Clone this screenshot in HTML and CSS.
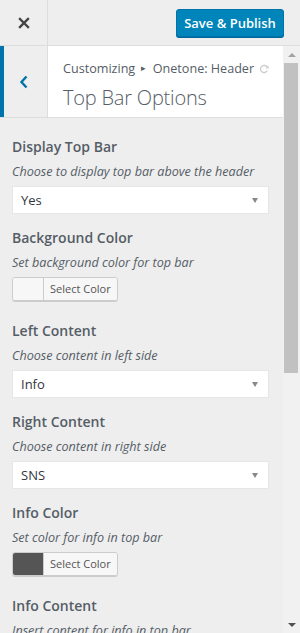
FILE: index.html
```html
<!DOCTYPE html>
<html lang="en">
<head>
 <meta charset="UTF-8">
 <meta name="viewport" content="width=device-width,initial-scale=1.0">
 <title>Customize: Top Bar Options</title>
 <link rel="stylesheet" href="styles.css">
</head>
<body>
<div class="header">
  <div class="close">
    <svg width="12" height="12" viewBox="0 0 12 12"><path d="M2 2 L10 10 M10 2 L2 10" stroke="#444" stroke-width="2.4" stroke-linecap="square"/></svg>
  </div>
  <div class="actions"><button type="button" class="publish">Save &amp; Publish</button></div>
</div>
<div class="frame">
  <div class="main">
    <div class="meta">
      <div class="back">
        <svg width="10" height="14" viewBox="0 0 10 14"><path d="M7.5 1.5 L2.5 7 L7.5 12.5" fill="none" stroke="#0073aa" stroke-width="2.4"/></svg>
      </div>
      <div class="meta_info">
        <div class="crumb">Customizing <span class="sep">&#9656;</span> Onetone: Header
          <svg class="refresh" width="10" height="10" viewBox="0 0 10 10"><path d="M8.3 3.5 A3.6 3.6 0 1 0 8.3 6.5" fill="none" stroke="#ccc" stroke-width="1.3"/><path d="M9.6 1.6 L9.6 4.6 L6.6 4.6 Z" fill="#ccc"/></svg>
        </div>
        <h2 class="panel_title">Top Bar Options</h2>
      </div>
    </div>
    <ul class="controls">
      <li class="control">
        <span class="control_title">Display Top Bar</span>
        <span class="description">Choose to display top bar above the header</span>
        <div class="select"><span>Yes</span><i class="arrow"></i></div>
      </li>
      <li class="control">
        <span class="control_title">Background Color</span>
        <span class="description">Set background color for top bar</span>
        <div class="picker"><span class="swatch"></span><span class="picker_label">Select Color</span></div>
      </li>
      <li class="control">
        <span class="control_title">Left Content</span>
        <span class="description">Choose content in left side</span>
        <div class="select"><span>Info</span><i class="arrow"></i></div>
      </li>
      <li class="control">
        <span class="control_title">Right Content</span>
        <span class="description">Choose content in right side</span>
        <div class="select"><span>SNS</span><i class="arrow"></i></div>
      </li>
      <li class="control">
        <span class="control_title">Info Color</span>
        <span class="description">Set color for info in top bar</span>
        <div class="picker"><span class="swatch swatch_dark"></span><span class="picker_label">Select Color</span></div>
      </li>
      <li class="control">
        <span class="control_title">Info Content</span>
        <span class="description">Insert content for info in top bar</span>
      </li>
    </ul>
  </div>
  <div class="scrollbar">
    <div class="sb_btn"><i class="sb_up"></i></div>
    <div class="sb_track"><div class="sb_thumb"></div></div>
    <div class="sb_btn"><i class="sb_down"></i></div>
  </div>
</div>
</body>
</html>
```
FILE: styles.css
```css
html, body{
  margin: 0;
  padding: 0;
}
body{
  width: 300px;
  height: 633px;
  overflow: hidden;
  background: #eee;
  font-family: "Open Sans", "Liberation Sans", sans-serif;
  color: #555d66;
  display: flex;
  flex-direction: column;
}
.header{
  height: 45px;
  border-bottom: 1px solid #ddd;
  display: flex;
  flex-shrink: 0;
}
.close{
  width: 47px;
  border-right: 1px solid #ddd;
  display: flex;
  align-items: center;
  justify-content: center;
}
.actions{
  flex: 1;
  display: flex;
  align-items: center;
  justify-content: flex-end;
  padding-right: 16px;
}
.publish{
  height: 28px;
  width: 108px;
  padding: 0;
  border: 1px solid #0073aa;
  border-radius: 3px;
  background: #0085ba;
  box-shadow: 0 1px 0 #006799;
  color: #fff;
  font-family: inherit;
  font-size: 13px;
  font-weight: 600;
  margin-top: 1px;
}
.frame{
  flex: 1;
  display: flex;
  min-height: 0;
}
.main{
  flex: 1;
  overflow: hidden;
}
.meta{
  display: flex;
  height: 71px;
  border-bottom: 1px solid #ddd;
  background: #fff;
}
.back{
  width: 48px;
  box-sizing: border-box;
  border-left: 4px solid #0073aa;
  border-right: 1px solid #ddd;
  background: #eee;
  display: flex;
  align-items: center;
  justify-content: center;
  padding-right: 4px;
}
.meta_info{
  flex: 1;
  padding: 12px 0 0 15px;
}
.crumb{
  font-size: 12.6px;
  line-height: 22px;
  white-space: nowrap;
}
.sep{
  font-size: 9px;
  padding: 0 3px;
  position: relative;
  top: -2px;
}
.refresh{
  margin-left: 2px;
  vertical-align: -1px;
}
.panel_title{
  margin: 4px 0 0;
  font-size: 20px;
  line-height: 26px;
  font-weight: 300;
  letter-spacing: -0.2px;
}
.controls{
  list-style: none;
  margin: 0;
  padding: 17px 14px 0 12px;
}
.control{
  margin-bottom: 12px;
}
.control_title{
  display: block;
  font-size: 14px;
  line-height: 24px;
  font-weight: 600;
  margin-bottom: 4px;
}
.description{
  display: block;
  font-size: 12.6px;
  font-style: italic;
  line-height: 18px;
  margin-bottom: 5px;
}
.select{
  height: 28px;
  box-sizing: border-box;
  background: #fff;
  border: 1px solid #e6e6e6;
  display: flex;
  align-items: center;
  justify-content: space-between;
  padding: 0 10px 0 8px;
  font-size: 13px;
  color: #32373c;
}
.arrow{
  width: 0;
  height: 0;
  border-left: 3.5px solid transparent;
  border-right: 3.5px solid transparent;
  border-top: 5px solid #888;
}
.picker{
  display: inline-flex;
  height: 24px;
  box-sizing: border-box;
  border: 1px solid #ccc;
  border-radius: 3px;
  box-shadow: 0 1px 0 #ccc;
  overflow: hidden;
  margin-bottom: 6px;
  vertical-align: top;
}
.swatch{
  width: 30px;
  background: #f7f7f7;
}
.swatch_dark{
  background: #555;
}
.picker_label{
  border-left: 1px solid #ccc;
  background: #f7f7f7;
  font-size: 11px;
  line-height: 22px;
  padding: 0 6px;
  color: #555;
}
.scrollbar{
  width: 17px;
  background: #f1f1f1;
  display: flex;
  flex-direction: column;
}
.sb_btn{
  height: 17px;
  display: flex;
  align-items: center;
  justify-content: center;
}
.sb_up, .sb_down{
  width: 0;
  height: 0;
  border-left: 4px solid transparent;
  border-right: 4px solid transparent;
}
.sb_up{
  border-bottom: 4px solid #a3a3a3;
}
.sb_down{
  border-top: 4px solid #505050;
}
.sb_track{
  flex: 1;
}
.sb_thumb{
  height: 310px;
  margin: 0 2px 0 1px;
  background: #c1c1c1;
}
```
